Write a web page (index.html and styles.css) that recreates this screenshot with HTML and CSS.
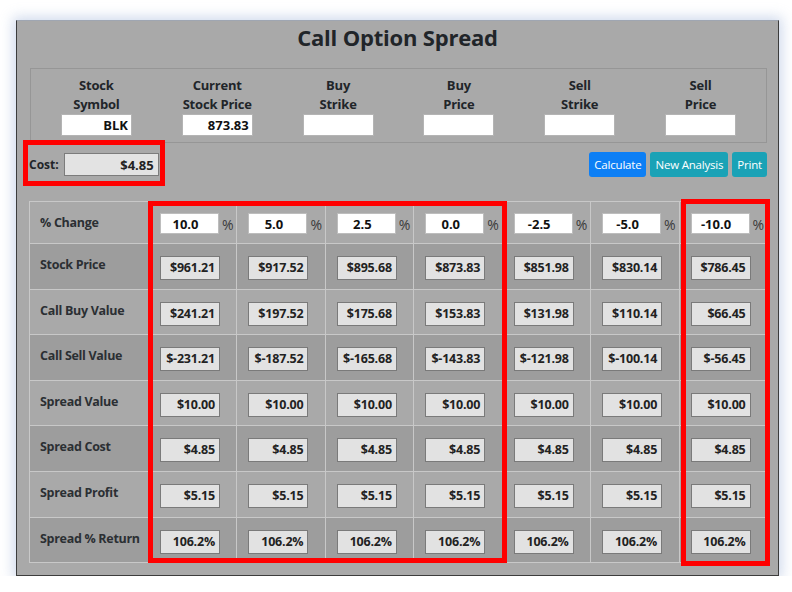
FILE: index.html
```html
<!DOCTYPE html>
<html lang="en">
<head>
  <meta charset="UTF-8" />
  <meta name="viewport" content="width=device-width, initial-scale=1.0"/>
  <title>Call Option Spread</title>
  <link rel="stylesheet" href="styles.css">
</head>
<body>

<div class="window">
  <h1 class="title">Call Option Spread</h1>

  <!-- Inputs -->
  <div class="inputs">
    <div class="field"><label>Stock<br>Symbol</label><input type="text" value="BLK"></div>
    <div class="field"><label>Current<br>Stock Price</label><input type="text" value="873.83"></div>
    <div class="field"><label>Buy<br>Strike</label><input type="text" value=""></div>
    <div class="field"><label>Buy<br>Price</label><input type="text" value=""></div>
    <div class="field"><label>Sell<br>Strike</label><input type="text" value=""></div>
    <div class="field"><label>Sell<br>Price</label><input type="text" value=""></div>
  </div>

  <div class="actions">
    <div class="cost">
      <label>Cost:</label>
      <input type="text" value="$4.85" readonly>
    </div>
    <div class="buttons">
      <button class="btn btn-blue">Calculate</button>
      <button class="btn btn-teal">New Analysis</button>
      <button class="btn btn-teal">Print</button>
    </div>
  </div>

  <!-- Results -->
  <table class="grid">
    <colgroup>
      <col class="col-label">
      <col><col><col><col><col><col><col>
    </colgroup>
    <tr class="head">
      <td class="label">% Change</td>
      <td><input class="pct" value="10.0"><span class="sign">%</span></td>
      <td><input class="pct" value="5.0"><span class="sign">%</span></td>
      <td><input class="pct" value="2.5"><span class="sign">%</span></td>
      <td><input class="pct" value="0.0"><span class="sign">%</span></td>
      <td><input class="pct" value="-2.5"><span class="sign">%</span></td>
      <td><input class="pct" value="-5.0"><span class="sign">%</span></td>
      <td><input class="pct" value="-10.0"><span class="sign">%</span></td>
    </tr>
    <tr class="odd">
      <td class="label">Stock Price</td>
      <td><span class="val">$961.21</span></td>
      <td><span class="val">$917.52</span></td>
      <td><span class="val">$895.68</span></td>
      <td><span class="val">$873.83</span></td>
      <td><span class="val">$851.98</span></td>
      <td><span class="val">$830.14</span></td>
      <td><span class="val">$786.45</span></td>
    </tr>
    <tr>
      <td class="label">Call Buy Value</td>
      <td><span class="val">$241.21</span></td>
      <td><span class="val">$197.52</span></td>
      <td><span class="val">$175.68</span></td>
      <td><span class="val">$153.83</span></td>
      <td><span class="val">$131.98</span></td>
      <td><span class="val">$110.14</span></td>
      <td><span class="val">$66.45</span></td>
    </tr>
    <tr class="odd">
      <td class="label">Call Sell Value</td>
      <td><span class="val">$-231.21</span></td>
      <td><span class="val">$-187.52</span></td>
      <td><span class="val">$-165.68</span></td>
      <td><span class="val">$-143.83</span></td>
      <td><span class="val">$-121.98</span></td>
      <td><span class="val">$-100.14</span></td>
      <td><span class="val">$-56.45</span></td>
    </tr>
    <tr>
      <td class="label">Spread Value</td>
      <td><span class="val">$10.00</span></td>
      <td><span class="val">$10.00</span></td>
      <td><span class="val">$10.00</span></td>
      <td><span class="val">$10.00</span></td>
      <td><span class="val">$10.00</span></td>
      <td><span class="val">$10.00</span></td>
      <td><span class="val">$10.00</span></td>
    </tr>
    <tr class="odd">
      <td class="label">Spread Cost</td>
      <td><span class="val">$4.85</span></td>
      <td><span class="val">$4.85</span></td>
      <td><span class="val">$4.85</span></td>
      <td><span class="val">$4.85</span></td>
      <td><span class="val">$4.85</span></td>
      <td><span class="val">$4.85</span></td>
      <td><span class="val">$4.85</span></td>
    </tr>
    <tr>
      <td class="label">Spread Profit</td>
      <td><span class="val">$5.15</span></td>
      <td><span class="val">$5.15</span></td>
      <td><span class="val">$5.15</span></td>
      <td><span class="val">$5.15</span></td>
      <td><span class="val">$5.15</span></td>
      <td><span class="val">$5.15</span></td>
      <td><span class="val">$5.15</span></td>
    </tr>
    <tr class="odd">
      <td class="label">Spread % Return</td>
      <td><span class="val">106.2%</span></td>
      <td><span class="val">106.2%</span></td>
      <td><span class="val">106.2%</span></td>
      <td><span class="val">106.2%</span></td>
      <td><span class="val">106.2%</span></td>
      <td><span class="val">106.2%</span></td>
      <td><span class="val">106.2%</span></td>
    </tr>
  </table>

  <!-- red highlight marks drawn over the screenshot -->
  <div class="mark mark-cost"></div>
  <div class="mark mark-up"></div>
  <div class="mark mark-down"></div>
</div>

</body>
</html>
```

FILE: styles.css
```css
* {
  box-sizing: border-box;
  margin: 0;
  padding: 0;
}

body {
  font-family: "Open Sans", "Noto Sans", sans-serif;
  background: #fff;
  color: #212529;
}

.window {
  position: relative;
  width: 763px;
  height: 556px;
  margin: 20px 0 0 16px;
  padding: 0 12px;
  background: #a9a9a9;
  border: 1px solid #3c3c3c;
  border-top-color: #9fa6b2;
  box-shadow: 0 0 12px 3px rgba(150, 172, 212, 0.45);
}

.title {
  font-size: 22px;
  font-weight: 700;
  line-height: 30px;
  padding-top: 1px;
  text-align: center;
  letter-spacing: -0.2px;
  color: #212529;
}

/* top input block */
.inputs {
  display: flex;
  width: 737px;
  margin: 16px 0 0 1px;
  padding: 7px 5px 6px;
  border: 1px solid #969696;
}

.field {
  flex: 1;
  display: flex;
  flex-direction: column;
  align-items: center;
}

.field label {
  font-size: 13px;
  font-weight: 700;
  line-height: 19px;
  letter-spacing: -0.2px;
  text-align: center;
}

.field input {
  width: 71px;
  height: 22px;
  padding: 0 3px;
  border: 1px solid #b4b4b4;
  background: #fff;
  font-family: inherit;
  font-size: 13px;
  font-weight: 700;
  color: #111;
  text-align: right;
}

.actions {
  display: flex;
  justify-content: space-between;
  align-items: center;
  width: 738px;
  margin-top: 9px;
}

.cost {
  display: flex;
  align-items: center;
  gap: 5px;
}

.cost label {
  font-size: 12px;
  font-weight: 700;
}

.cost input {
  width: 95px;
  height: 23px;
  padding: 0 4px;
  border: 1px solid #7c7c7c;
  background: #e3e3e3;
  font-family: inherit;
  font-size: 13px;
  font-weight: 700;
  color: #222;
  text-align: right;
}

.buttons {
  display: flex;
  gap: 4px;
}

.btn {
  height: 25px;
  padding: 0 5px;
  border: none;
  border-radius: 3px;
  font-family: inherit;
  font-size: 11.5px;
  letter-spacing: -0.2px;
  color: #fff;
}

.btn-blue {
  background: #0d7ff5;
}

.btn-teal {
  background: #1aa2b6;
}

/* results table */
.grid {
  width: 739px;
  margin-top: 24px;
  border-collapse: collapse;
  table-layout: fixed;
}

.col-label {
  width: 119px;
}

.grid td {
  height: 45.6px;
  padding: 11px 0 0 11px;
  vertical-align: top;
  border: 1px solid #c8c8c8;
}

.grid tr.head td {
  height: 42px;
  padding-top: 11px;
}

.grid tr.odd td {
  background: #9d9d9d;
}

.grid td.label {
  padding-left: 10px;
  font-size: 12.5px;
  font-weight: 700;
  line-height: 19px;
  letter-spacing: -0.3px;
  white-space: nowrap;
  color: #2b2f33;
}

.pct {
  width: 59px;
  height: 21px;
  padding: 0 8px 0 0;
  border: 1px solid #bdbdbd;
  background: #fff;
  font-family: inherit;
  font-size: 13px;
  font-weight: 700;
  color: #111;
  text-align: center;
  vertical-align: top;
}

.sign {
  margin-left: 3px;
  font-size: 14px;
  line-height: 21px;
  color: #3a3a3a;
}

.val {
  display: block;
  width: 60px;
  height: 24px;
  margin-top: 1px;
  padding-right: 4px;
  border: 1px solid #7a7a7a;
  background: #e2e2e2;
  font-size: 12.5px;
  font-weight: 700;
  line-height: 22px;
  letter-spacing: -0.2px;
  color: #222;
  text-align: right;
}

/* annotation boxes */
.mark {
  position: absolute;
  border: 5px solid #f00;
}

.mark-cost {
  left: 6px;
  top: 119px;
  width: 142px;
  height: 46px;
}

.mark-up {
  left: 131px;
  top: 180px;
  width: 359px;
  height: 362px;
}

.mark-down {
  left: 664px;
  top: 178px;
  width: 89px;
  height: 367px;
}
```
